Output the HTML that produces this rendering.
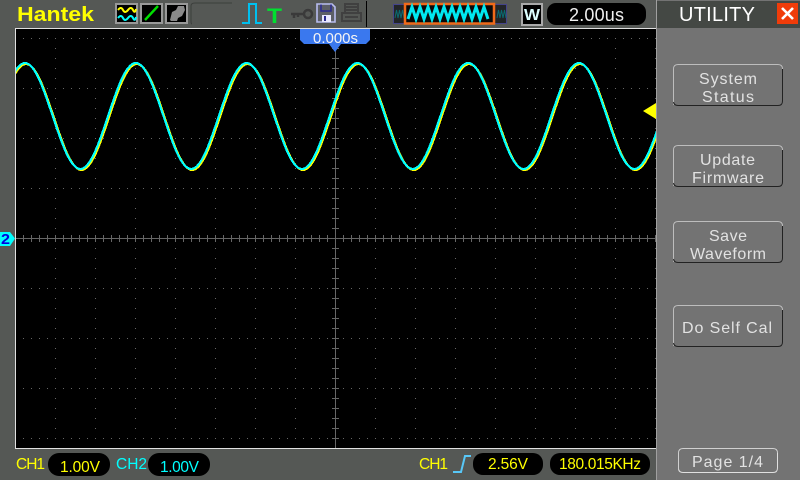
<!DOCTYPE html>
<html><head><meta charset="utf-8"><style>
html,body{margin:0;padding:0;background:#555855;width:800px;height:480px;overflow:hidden}
svg{display:block}
text{font-family:"Liberation Sans",sans-serif;font-size:16px;fill:#e2e2e2}
</style></head><body>
<svg width="800" height="480" viewBox="0 0 800 480" xmlns="http://www.w3.org/2000/svg">
<defs>
<pattern id="hd" x="23" y="38" width="8" height="50" patternUnits="userSpaceOnUse"><rect width="1" height="1" fill="#666"/></pattern>
<pattern id="vd" x="55" y="38" width="40" height="10" patternUnits="userSpaceOnUse"><rect width="1" height="1" fill="#666"/></pattern>
<pattern id="ht" x="23" y="235" width="8" height="7" patternUnits="userSpaceOnUse"><rect width="1" height="7" fill="#666"/></pattern>
<pattern id="vt" x="332" y="38" width="7" height="10" patternUnits="userSpaceOnUse"><rect width="7" height="1" fill="#666"/></pattern>
<clipPath id="scr"><rect x="16" y="29" width="640" height="419"/></clipPath>
</defs>
<rect width="800" height="480" fill="#555855"/>
<!-- screen -->
<rect x="15" y="28" width="641" height="421" fill="#e0e0e0"/>
<rect x="16" y="29" width="640" height="419" fill="#000"/>
<rect x="16" y="38" width="640" height="401" fill="url(#hd)"/>
<rect x="55" y="38" width="601" height="401" fill="url(#vd)"/>
<rect x="16" y="238" width="640" height="1" fill="#666"/>
<rect x="335" y="29" width="1" height="419" fill="#666"/>
<rect x="16" y="235" width="640" height="7" fill="url(#ht)"/>
<rect x="332" y="38" width="7" height="401" fill="url(#vt)"/>
<!-- waves -->
<g clip-path="url(#scr)" fill="none" stroke-width="2.2" shape-rendering="crispEdges">
<path transform="translate(1 1)" stroke="#ffff00" d="M-30.4 169c20.18 0 35.22-106 55.4-106s35.22 106 55.4 106s35.22-106 55.4-106s35.22 106 55.4 106s35.22-106 55.4-106s35.22 106 55.4 106s35.22-106 55.4-106s35.22 106 55.4 106s35.22-106 55.4-106s35.22 106 55.4 106s35.22-106 55.4-106s35.22 106 55.4 106s35.22-106 55.4-106s35.22 106 55.4 106"/>
<path stroke="#00ffff" d="M-30.4 169c20.18 0 35.22-106 55.4-106s35.22 106 55.4 106s35.22-106 55.4-106s35.22 106 55.4 106s35.22-106 55.4-106s35.22 106 55.4 106s35.22-106 55.4-106s35.22 106 55.4 106s35.22-106 55.4-106s35.22 106 55.4 106s35.22-106 55.4-106s35.22 106 55.4 106s35.22-106 55.4-106s35.22 106 55.4 106"/>
</g>
<!-- time marker -->
<path d="M300 29H370V40L366 44H341L335 52L329 44H304L300 40Z" fill="#3a78ee"/>
<text x="313" y="43" textLength="45" lengthAdjust="spacing" style="font-size:15px;fill:#f4f4f4">0.000s</text>
<!-- trigger level arrow -->
<path d="M643 111L656 103V119Z" fill="#ffff00"/>
<!-- ch2 marker -->
<path d="M0 232H10L15 238.5L10 246H0Z" fill="#00ffff"/>
<text x="1" y="244" textLength="9" lengthAdjust="spacingAndGlyphs" style="font-size:15px;font-weight:bold;fill:#0000e0">2</text>
<!-- top bar -->
<text x="17" y="21" textLength="77" lengthAdjust="spacingAndGlyphs" style="font-size:20px;font-weight:bold;fill:#ffff00">Hantek</text>
<rect x="116" y="4" width="21" height="19" fill="#000" stroke="#999" stroke-width="2"/>
<path d="M118 10q3-4 5 0t5 0t5 0t3-1" fill="none" stroke="#ffff00" stroke-width="2"/>
<path d="M118 18q3-4 5 0t5 0t5 0t3-1" fill="none" stroke="#00ffff" stroke-width="2"/>
<rect x="141" y="4" width="21" height="19" fill="#000" stroke="#999" stroke-width="2"/>
<path d="M145 20L158 6" stroke="#00e000" stroke-width="2.4" fill="none"/>
<rect x="166" y="4" width="21" height="19" fill="#000" stroke="#999" stroke-width="2"/>
<path d="M170 20L172 12L176 10L178 6H184L185 10L182 16L178 18L177 21H171Z" fill="#8a8a8a"/>
<path d="M192 24Q191 24 191 21V6Q191 3 195 3H232" fill="none" stroke="#3c3f3c" stroke-width="1"/>
<path d="M242 23H249V4H256V23H262" fill="none" stroke="#00c0f0" stroke-width="2"/>
<text x="267" y="23" textLength="15" lengthAdjust="spacingAndGlyphs" style="font-size:21px;font-weight:bold;fill:#00e030">T</text>
<path d="M291 14H304M294 14V18M298 14V17" stroke="#3a3a3a" stroke-width="2.5" fill="none"/>
<circle cx="308" cy="14" r="4" fill="none" stroke="#3a3a3a" stroke-width="2.5"/>
<path d="M317 4H332L335 7V22H317Z" fill="#5c5f66" stroke="#b8bdf0" stroke-width="1.6"/>
<path d="M321 4.5V11H331V4.5" fill="none" stroke="#2a2a90" stroke-width="1.5"/>
<rect x="322" y="15" width="9" height="7" fill="#e8e8ff"/><rect x="324" y="16" width="2" height="5" fill="#2a2a90"/>
<path d="M345 12V4H358V12M342 13H361V21H342ZM346 7H357M346 10H357M345 17H358" fill="none" stroke="#404040" stroke-width="2"/>
<rect x="366" y="1" width="1" height="26" fill="#000"/>
<rect x="393.5" y="4.5" width="113" height="19" fill="#222528" stroke="#44448a"/>
<path d="M395 18l1.5-8 1.5 8 1.5-8 1.5 8 1.5-8 1.5 8M497 18l1.5-8 1.5 8 1.5-8 1.5 8 1.5-8 1.5 8" fill="none" stroke="#0a6a70" stroke-width="1"/>
<rect x="405" y="4" width="89" height="19.500" fill="#0a0a0a" stroke="#f06a1a" stroke-width="2.500"/>
<path d="M408 19l4-12 4 12 4-12 4 12 4-12 4 12 4-12 4 12 4-12 4 12 4-12 4 12 4-12 4 12 4-12 4 12 4-12 4 12 4-12 4 12" fill="none" stroke="#00e8f0" stroke-width="3"/>
<rect x="522" y="4" width="20" height="21" fill="#000" stroke="#aaa" stroke-width="2"/>
<text x="524" y="20" textLength="16" lengthAdjust="spacingAndGlyphs" style="font-size:16px;font-weight:bold;fill:#dff">W</text>
<rect x="547" y="3" width="99" height="22" rx="9" fill="#000"/>
<text x="569" y="21" textLength="55" lengthAdjust="spacing" style="font-size:18px;fill:#f0f0f0">2.00us</text>
<!-- bottom bar -->
<text x="16" y="469" textLength="29" lengthAdjust="spacing" style="font-size:15.5px;fill:#ffff00">CH1</text>
<rect x="48" y="453" width="62" height="23" rx="11" fill="#000"/>
<text x="60" y="472" textLength="40" lengthAdjust="spacing" style="font-size:15.5px;fill:#ffff00">1.00V</text>
<text x="116" y="469" textLength="31" lengthAdjust="spacing" style="font-size:15.5px;fill:#00ffff">CH2</text>
<rect x="148" y="453" width="62" height="23" rx="11" fill="#000"/>
<text x="160" y="472" textLength="39" lengthAdjust="spacing" style="font-size:15.5px;fill:#00ffff">1.00V</text>
<text x="419" y="469" textLength="29" lengthAdjust="spacing" style="font-size:15.5px;fill:#ffff00">CH1</text>
<path d="M453 472H461L465 456H471" fill="none" stroke="#58c8f8" stroke-width="2"/>
<rect x="473" y="453" width="70" height="22" rx="10" fill="#000"/>
<text x="488" y="469" textLength="40" lengthAdjust="spacing" style="font-size:15.5px;fill:#ffff00">2.56V</text>
<rect x="550" y="453" width="100" height="22" rx="10" fill="#000"/>
<text x="559" y="469" textLength="82" lengthAdjust="spacing" style="font-size:15.5px;fill:#ffff00">180.015KHz</text>
<!-- right panel -->
<rect x="657" y="0" width="143" height="480" fill="#737373"/>
<rect x="656" y="0" width="1" height="480" fill="#a0a0a0"/>
<rect x="657" y="1" width="143" height="27" fill="#444844"/>
<text x="679" y="21" textLength="76" lengthAdjust="spacing" style="font-size:20px;fill:#fff">UTILITY</text>
<rect x="777" y="3" width="21" height="21" fill="#f03c0a"/>
<path d="M782 8L793 19M793 8L782 19" stroke="#fff" stroke-width="2.6"/>
<g fill="none" stroke-width="1">
<path d="M673.5 105V69Q673.5 64.5 678 64.5H778Q782.5 64.5 782.5 69" stroke="#bdbdbd"/><path d="M782.5 69V101Q782.5 105.5 778 105.5H678Q674 105.5 673.5 102" stroke="#222"/>
<path d="M673.5 186V150Q673.5 145.5 678 145.5H778Q782.5 145.5 782.5 150" stroke="#bdbdbd"/><path d="M782.5 150V182Q782.5 186.5 778 186.5H678Q674 186.5 673.5 183" stroke="#222"/>
<path d="M673.5 262V226Q673.5 221.5 678 221.5H778Q782.5 221.5 782.5 226" stroke="#bdbdbd"/><path d="M782.5 226V258Q782.5 262.5 778 262.5H678Q674 262.5 673.5 259" stroke="#222"/>
<path d="M673.5 346V310Q673.5 305.5 678 305.5H778Q782.5 305.5 782.5 310" stroke="#bdbdbd"/><path d="M782.5 310V342Q782.5 346.5 778 346.5H678Q674 346.5 673.5 343" stroke="#222"/>
<path d="M678.5 469V453Q678.5 448.5 683 448.5H773Q777.5 448.5 777.5 453" stroke="#d0d0d0"/><path d="M777.5 453V468Q777.5 472.5 773 472.5H683Q679 472.5 678.5 469" stroke="#e0e0e0"/>
</g>
<text x="699" y="84" textLength="58" lengthAdjust="spacing">System</text>
<text x="702" y="102" textLength="52" lengthAdjust="spacing">Status</text>
<text x="700" y="165" textLength="55" lengthAdjust="spacing">Update</text>
<text x="692" y="183" textLength="72" lengthAdjust="spacing">Firmware</text>
<text x="709" y="241" textLength="38" lengthAdjust="spacing">Save</text>
<text x="690" y="259" textLength="76" lengthAdjust="spacing">Waveform</text>
<text x="682" y="333" textLength="90" lengthAdjust="spacing">Do Self Cal</text>
<text x="692" y="467" textLength="71" lengthAdjust="spacing">Page 1/4</text>
</svg>
</body></html>
